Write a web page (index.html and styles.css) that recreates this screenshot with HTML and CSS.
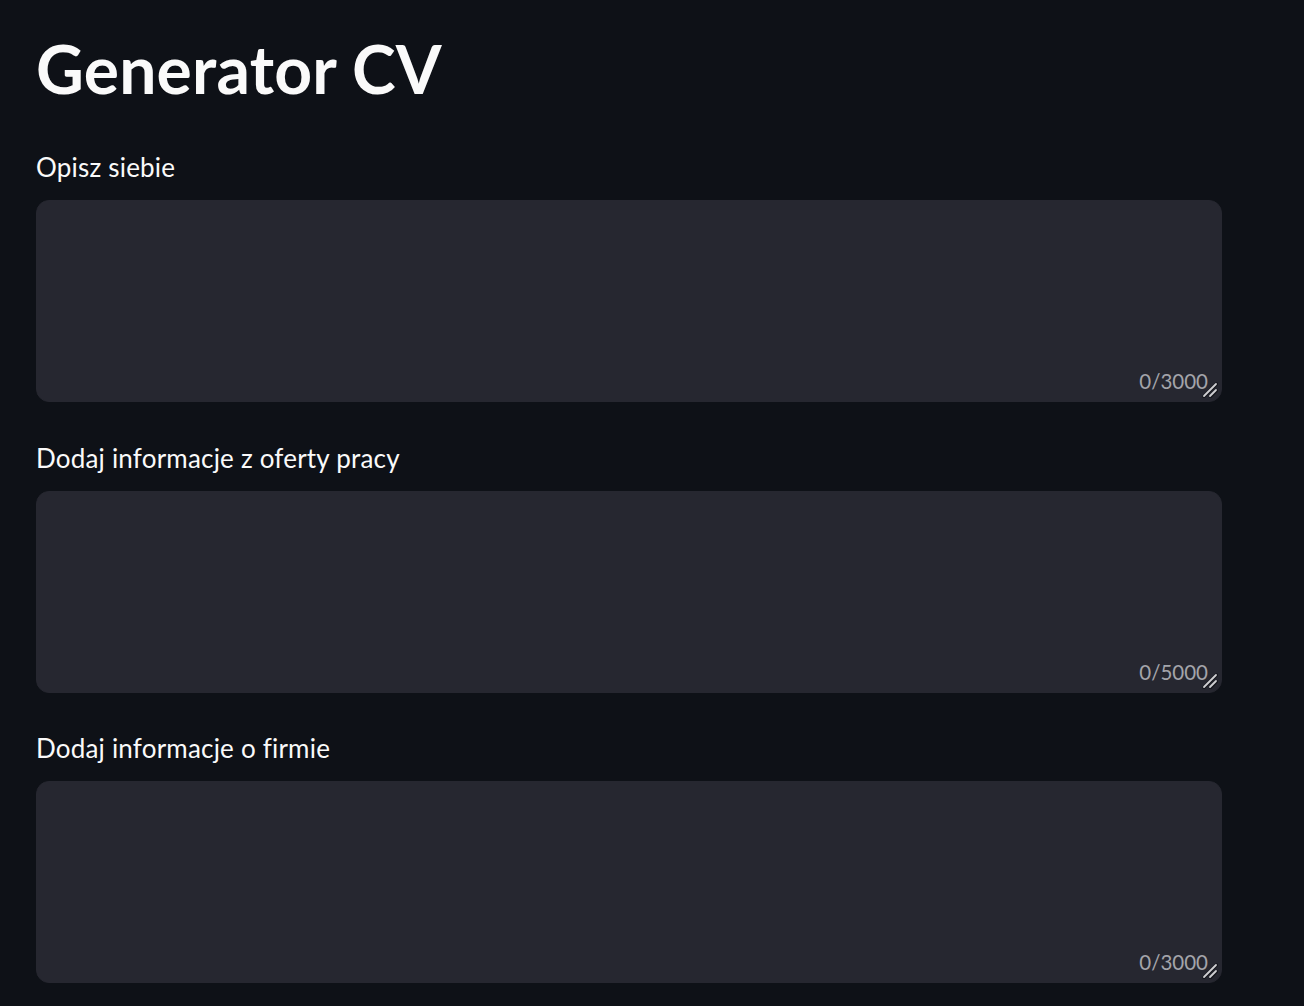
FILE: index.html
```html
<!DOCTYPE html>
<html lang="pl">
<head>
<meta charset="utf-8">
<title>Generator CV</title>
<link rel="stylesheet" href="styles.css">
</head>
<body>
<main class="app">
  <h1 class="title">Generator CV</h1>
  <div class="field">
    <label class="label" for="t1">Opisz siebie</label>
    <div class="box">
      <textarea id="t1" class="area" maxlength="3000"></textarea>
      <span class="count">0/3000</span>
      <svg class="grip" width="16" height="16" viewBox="0 0 16 16" aria-hidden="true"><path d="M2 14.5 L14.5 2 M8.5 14.5 L14.5 8.5" stroke="#15161c" stroke-width="3.2" stroke-linecap="round"/><path d="M2 14 L14 2 M8 14 L14 8" stroke="#cfcfd2" stroke-width="1.8" stroke-linecap="round"/></svg>
    </div>
  </div>
  <div class="field">
    <label class="label" for="t2">Dodaj informacje z oferty pracy</label>
    <div class="box">
      <textarea id="t2" class="area" maxlength="5000"></textarea>
      <span class="count">0/5000</span>
      <svg class="grip" width="16" height="16" viewBox="0 0 16 16" aria-hidden="true"><path d="M2 14.5 L14.5 2 M8.5 14.5 L14.5 8.5" stroke="#15161c" stroke-width="3.2" stroke-linecap="round"/><path d="M2 14 L14 2 M8 14 L14 8" stroke="#cfcfd2" stroke-width="1.8" stroke-linecap="round"/></svg>
    </div>
  </div>
  <div class="field">
    <label class="label" for="t3">Dodaj informacje o firmie</label>
    <div class="box">
      <textarea id="t3" class="area" maxlength="3000"></textarea>
      <span class="count">0/3000</span>
      <svg class="grip" width="16" height="16" viewBox="0 0 16 16" aria-hidden="true"><path d="M2 14.5 L14.5 2 M8.5 14.5 L14.5 8.5" stroke="#15161c" stroke-width="3.2" stroke-linecap="round"/><path d="M2 14 L14 2 M8 14 L14 8" stroke="#cfcfd2" stroke-width="1.8" stroke-linecap="round"/></svg>
    </div>
  </div>
</main>
</body>
</html>
```

FILE: styles.css
```css
html, body {
  margin: 0;
  padding: 0;
  background: #0e1117;
  height: 100%;
  overflow: hidden;
}
body {
  font-family: "Lato", "Liberation Sans", sans-serif;
  color: #fafafa;
}
.app {
  width: 1186px;
  padding: 24px 0 0 36px;
  display: flex;
  flex-direction: column;
}
.title {
  margin: 0 0 36px;
  font-size: 66px;
  line-height: 90px;
  font-weight: 700;
  letter-spacing: 0.2px;
}
.field {
  display: flex;
  flex-direction: column;
  margin-bottom: 38.5px;
}
.label {
  font-size: 26px;
  line-height: 34px;
  margin-bottom: 16px;
  letter-spacing: 0.2px;
  color: #fafafa;
}
.box {
  position: relative;
  height: 202px;
}
.area {
  box-sizing: border-box;
  width: 100%;
  height: 202px;
  margin: 0;
  display: block;
  background: #262730;
  border: 1px solid #262730;
  border-radius: 13px;
  color: #fafafa;
  font-family: inherit;
  font-size: 24px;
  padding: 14px 20px;
  resize: none;
  outline: none;
  color-scheme: dark;
}
.count {
  position: absolute;
  right: 14px;
  bottom: 7px;
  font-size: 20.5px;
  line-height: 28px;
  color: #a3a4aa;
}
.grip {
  position: absolute;
  right: 4px;
  bottom: 4px;
}
```
